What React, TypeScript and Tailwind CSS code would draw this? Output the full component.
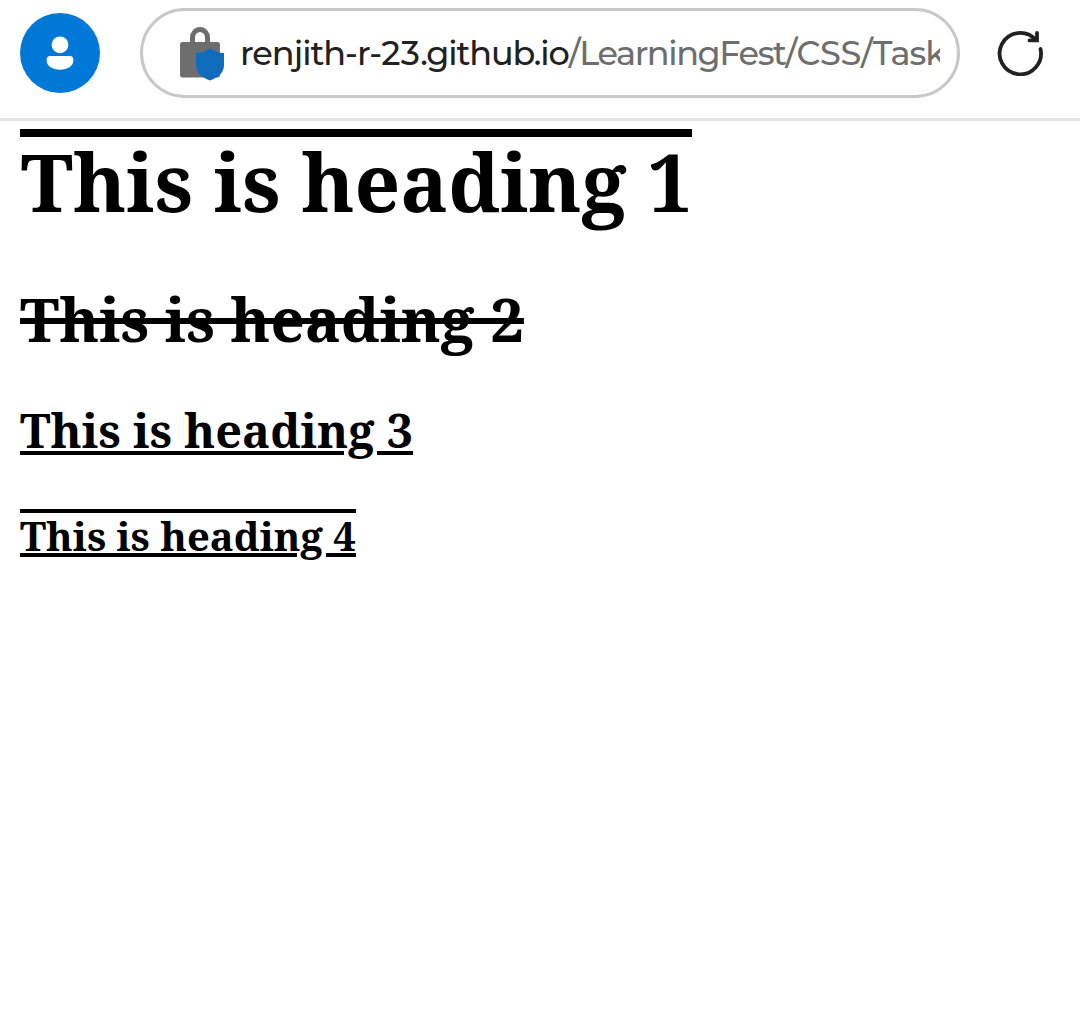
function ProfileIcon() {
  return (
    <svg className="size-20 shrink-0" viewBox="0 0 80 80" aria-hidden="true">
      <circle cx="40" cy="40" r="40" fill="#0078d7" />
      <circle cx="40" cy="31.8" r="8.4" fill="#fff" />
      <path d="M30 43h20c2.200 0 3.300 1.300 3.300 3.300v1.700c0 4.900-6.100 8.700-13.300 8.700s-13.300-3.800-13.300-8.700v-1.700c0-2 1.100-3.300 3.300-3.300z" fill="#fff" />
    </svg>
  );
}

function LockIcon() {
  return (
    <svg className="mt-[3px] h-14 w-11 shrink-0" viewBox="0 0 44 56" aria-hidden="true">
      <path d="M12.500 18V11.500a7.500 8 0 0 1 15 0V18" fill="none" stroke="#6e6e6e" strokeWidth="5" />
      <rect y="16" width="40" height="35.500" rx="2.500" fill="#6e6e6e" />
      <path d="M30 22c3.800 3 8.500 5 14 5v12c0 7.500-5.500 12.500-14 15.500-8.500-3-14-8-14-15.500V27c5.500 0 10.200-2 14-5z" fill="#0f6cbd" />
    </svg>
  );
}

function ReloadIcon() {
  return (
    <svg className="size-12 shrink-0" viewBox="0 0 48 48" fill="none" stroke="#212121" strokeWidth="3.800" strokeLinecap="round" aria-hidden="true">
      <path d="M44.500 21A20.700 20.700 0 1 1 39.500 11.500" />
      <path d="M41 5v7.400h-7.500" strokeLinejoin="miter" />
    </svg>
  );
}

export default function App() {
  return (
    <div className="min-h-screen bg-white">
      <header className="flex h-[121px] items-start border-b-[3px] border-[#e4e4e4] pl-5">
        <div className="pt-[12.5px]">
          <ProfileIcon />
        </div>
        <div className="mt-[7.500px] ml-10 flex h-[90px] w-[820px] items-center rounded-full border-[3px] border-[#c8c8c8] pl-[37px]">
          <LockIcon />
          <div className="ml-4 w-[700px] overflow-hidden pt-px whitespace-nowrap font-['Montserrat',sans-serif] text-[33.5px] leading-[50px] font-medium tracking-[-1px]">
            <span className="text-[#212121]">
              renjith-r-<span className="tracking-[0.3px]">23</span><span className="tracking-[-1.1px]">.github.io</span>
            </span>
            <span className="text-[#6e6e6e]">
              <span className="tracking-[-1.4px]">/LearningFest</span>
              <span className="tracking-[-0.3px]">/CSS</span>/Task
            </span>
          </div>
        </div>
        <div className="mt-[27.5px] ml-9">
          <ReloadIcon />
        </div>
      </header>
      <main className="px-5 pt-2 font-['Noto_Serif',serif] font-bold text-black">
        <h1 className="w-[672px] border-t-8 border-black indent-[0.7px] text-[80px] leading-[87px] whitespace-nowrap">This is heading 1</h1>
        <h2 className="mt-[54px] text-[60px] leading-[82px] line-through">This is heading 2</h2>
        <h3 className="mt-[38px] text-[46.8px] leading-[64px] underline">This is heading 3</h3>
        <h4 className="mt-[47px] w-fit border-t-4 border-black text-[40px] leading-[46px] underline">This is heading 4</h4>
      </main>
    </div>
  );
}
